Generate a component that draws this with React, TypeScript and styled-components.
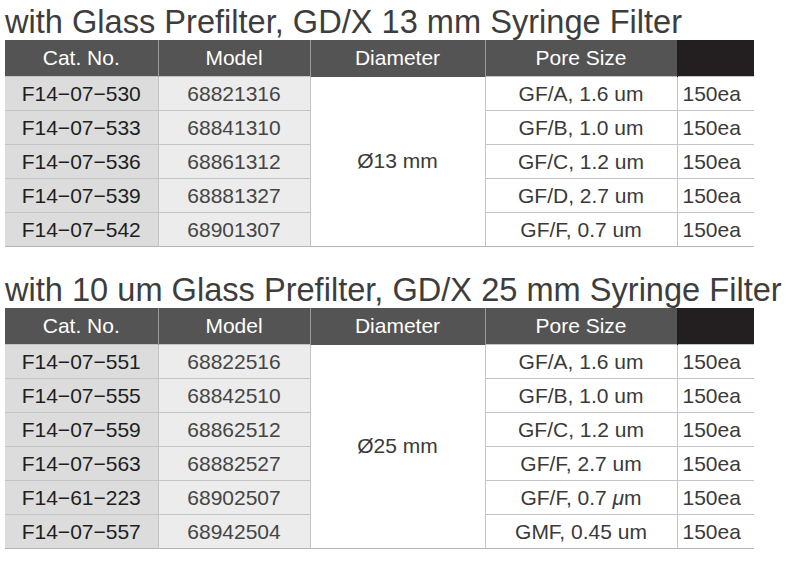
import React from 'react';
import styled, { createGlobalStyle } from 'styled-components';

const GlobalStyle = createGlobalStyle`
  body {
    margin: 0;
    background: #fff;
    font-family: 'Liberation Sans', Arial, sans-serif;
  }
`;

type Row = {
  cat: string;
  model: string;
  pore: React.ReactNode;
  qty: string;
};

type Section = {
  title: string;
  diameter: string;
  rows: Row[];
};

const sections: Section[] = [
  {
    title: 'with Glass Prefilter, GD/X 13 mm Syringe Filter',
    diameter: 'Ø13 mm',
    rows: [
      { cat: 'F14−07−530', model: '68821316', pore: 'GF/A, 1.6 um', qty: '150ea' },
      { cat: 'F14−07−533', model: '68841310', pore: 'GF/B, 1.0 um', qty: '150ea' },
      { cat: 'F14−07−536', model: '68861312', pore: 'GF/C, 1.2 um', qty: '150ea' },
      { cat: 'F14−07−539', model: '68881327', pore: 'GF/D, 2.7 um', qty: '150ea' },
      { cat: 'F14−07−542', model: '68901307', pore: 'GF/F, 0.7 um', qty: '150ea' },
    ],
  },
  {
    title: 'with 10 um Glass Prefilter, GD/X 25 mm Syringe Filter',
    diameter: 'Ø25 mm',
    rows: [
      { cat: 'F14−07−551', model: '68822516', pore: 'GF/A, 1.6 um', qty: '150ea' },
      { cat: 'F14−07−555', model: '68842510', pore: 'GF/B, 1.0 um', qty: '150ea' },
      { cat: 'F14−07−559', model: '68862512', pore: 'GF/C, 1.2 um', qty: '150ea' },
      { cat: 'F14−07−563', model: '68882527', pore: 'GF/F, 2.7 um', qty: '150ea' },
      {
        cat: 'F14−61−223',
        model: '68902507',
        pore: (
          <>
            GF/F, 0.7 <i>μ</i>m
          </>
        ),
        qty: '150ea',
      },
      { cat: 'F14−07−557', model: '68942504', pore: 'GMF, 0.45 um', qty: '150ea' },
    ],
  },
];

const Page = styled.div`
  padding: 0 0 0 5px;
  width: 795px;
`;

const Block = styled.section`
  & + & {
    margin-top: 21px;
  }
`;

const Title = styled.h2`
  margin: 0;
  height: 40px;
  line-height: 43px;
  font-size: 32.6px;
  font-weight: normal;
  color: #3d3d3d;
  white-space: nowrap;
`;

const Table = styled.table`
  border-collapse: collapse;
  table-layout: fixed;
  width: 749px;
  font-size: 21px;
  border-bottom: 1px solid #b4b4b4;
`;

const HeadCell = styled.th<{ $dark?: boolean }>`
  height: 36px;
  padding: 0;
  font-weight: normal;
  color: #fff;
  background: ${(p) => (p.$dark ? '#231f20' : '#545454')};
  border-left: 1px solid ${(p) => (p.$dark ? '#231f20' : '#9a9a9a')};
  &:first-child {
    border-left: none;
  }
`;

const Cell = styled.td<{ $bg?: string; $color?: string; $left?: boolean }>`
  height: 33px;
  padding: ${(p) => (p.$left ? '0 0 0 5px' : '0')};
  text-align: ${(p) => (p.$left ? 'left' : 'center')};
  color: ${(p) => p.$color || '#3a3a3a'};
  background: ${(p) => p.$bg || '#fff'};
  border-top: 1px solid #c4c4c4;
  border-left: 1px solid #c4c4c4;
  &:first-child {
    border-left: none;
  }
`;

const SpanCell = styled.td`
  padding: 0;
  text-align: center;
  color: #3a3a3a;
  border-left: 1px solid #c4c4c4;
  border-top: none;
`;

function ProductTable({ section }: { section: Section }) {
  return (
    <Table>
      <colgroup>
        <col style={{ width: 153 }} />
        <col style={{ width: 152 }} />
        <col style={{ width: 175 }} />
        <col style={{ width: 192 }} />
        <col style={{ width: 77 }} />
      </colgroup>
      <thead>
        <tr>
          <HeadCell>Cat. No.</HeadCell>
          <HeadCell>Model</HeadCell>
          <HeadCell>Diameter</HeadCell>
          <HeadCell>Pore Size</HeadCell>
          <HeadCell $dark />
        </tr>
      </thead>
      <tbody>
        {section.rows.map((row, i) => (
          <tr key={row.cat}>
            <Cell $bg="#dcdcdc" $color="#1e1e1e">
              {row.cat}
            </Cell>
            <Cell $bg="#ececec" $color="#454545">
              {row.model}
            </Cell>
            {i === 0 && <SpanCell rowSpan={section.rows.length}>{section.diameter}</SpanCell>}
            <Cell>{row.pore}</Cell>
            <Cell $left>{row.qty}</Cell>
          </tr>
        ))}
      </tbody>
    </Table>
  );
}

export default function App() {
  return (
    <Page>
      <GlobalStyle />
      {sections.map((s) => (
        <Block key={s.title}>
          <Title>{s.title}</Title>
          <ProductTable section={s} />
        </Block>
      ))}
    </Page>
  );
}
